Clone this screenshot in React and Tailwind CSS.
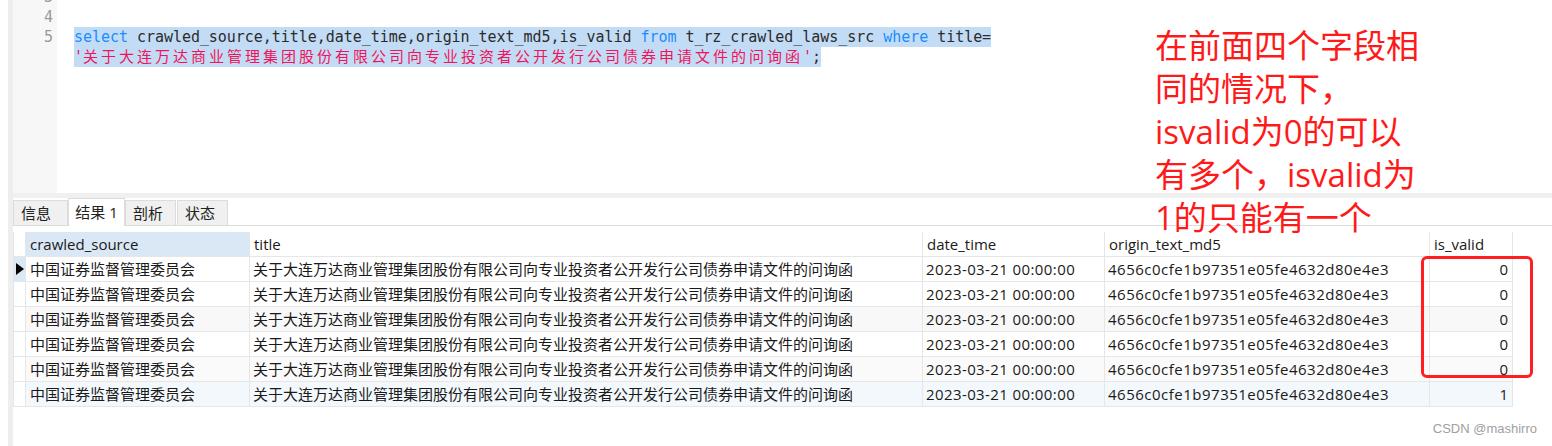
const cols = ["crawled_source", "title", "date_time", "origin_text_md5", "is_valid"];

const row = {
  src: "中国证券监督管理委员会",
  title: "关于大连万达商业管理集团股份有限公司向专业投资者公开发行公司债券申请文件的问询函",
  date: "2023-03-21 00:00:00",
  md5: "4656c0cfe1b97351e05fe4632d80e4e3",
};

const rows = [
  { valid: 0, bg: "bg-white", current: true },
  { valid: 0, bg: "bg-white" },
  { valid: 0, bg: "bg-[#f8f8f8]" },
  { valid: 0, bg: "bg-white" },
  { valid: 0, bg: "bg-[#fafafa]" },
  { valid: 1, bg: "bg-[#f3f8fd]" },
];

const mono = "font-['DejaVu_Sans_Mono','Noto_Sans_CJK_SC',monospace]";
const ui = "font-['Open_Sans','Noto_Sans_CJK_SC',sans-serif]";

function Editor() {
  return (
    <div className="flex h-[193px] shrink-0">
      <div className={`w-[44px] shrink-0 bg-[#f7f7f7] text-right pr-[4px] text-[15px] leading-5 text-[#999] ${mono}`}>
        <div className="-mt-[13px]">
          <div>3</div>
          <div>4</div>
          <div>5</div>
        </div>
      </div>
      <div className={`flex-1 pl-[17px] text-[15px] leading-5 text-[#2b2b2b] ${mono}`}>
        <div className="-mt-[13px]">
          <div className="h-5" />
          <div className="h-5" />
          <div className="h-5">
            <span className="inline-block h-5 whitespace-pre bg-[#c3dcf6] tracking-[-0.04px]">
              <span className="text-[#1a8cff]">select</span> crawled_source,title,date_time,origin_text_md5,is_valid{" "}
              <span className="text-[#1a8cff]">from</span> t_rz_crawled_laws_src <span className="text-[#1a8cff]">where</span> title=
            </span>
          </div>
          <div className="h-5">
            <span className="inline-block h-5 whitespace-pre bg-[#c3dcf6] text-[#f0145a]">
              '<span className="tracking-[3px]">{row.title}</span>'<span className="text-[#2b2b2b]">;</span>
            </span>
          </div>
        </div>
      </div>
    </div>
  );
}

function Tabs() {
  const tabs = ["信息", "结果 1", "剖析", "状态"];
  return (
    <div className={`flex h-[28px] shrink-0 items-end border-b border-[#dcdcdc] text-[15px] text-[#222] ${ui}`}>
      {tabs.map((t, i) =>
        i === 1 ? (
          <div key={t} className="-mb-px flex h-[28px] w-[57px] items-center justify-center border border-b-0 border-[#dcdcdc] bg-white">
            {t}
          </div>
        ) : (
          <div
            key={t}
            className={`flex h-[25px] items-center border border-b-0 border-[#dcdcdc] bg-[#f0f0f0] pl-[7px] ${i === 0 ? "w-[55px]" : "w-[51px]"} ${i === 3 ? "ml-px" : ""}`}
          >
            {t}
          </div>
        )
      )}
    </div>
  );
}

function Cell({ children, className = "" }) {
  return (
    <div className={`flex h-[25px] items-center overflow-hidden whitespace-nowrap border-r border-b border-[#e6e6e6] ${className}`}>
      {children}
    </div>
  );
}

function Table() {
  return (
    <div className={`mt-[6px] grid w-max grid-cols-[13px_224px_673px_182px_325px_83px] text-[15px] text-[#1a1a1a] ${ui}`}>
      <Cell className="border-l bg-white" />
      {cols.map((c, i) => (
        <Cell key={c} className={`pl-1 ${i === 0 ? "bg-[#dae8f6]" : "bg-white"}`}>
          {c}
        </Cell>
      ))}
      {rows.map((r, i) => (
        <div key={i} className="contents">
          <Cell className={`border-l justify-center ${r.current ? "bg-[#dae8f6]" : "bg-white"}`}>
            {r.current && (
              <svg width="8" height="12" viewBox="0 0 8 12">
                <polygon points="0,0 8,6 0,12" fill="#000" />
              </svg>
            )}
          </Cell>
          <Cell className={`pl-1 ${r.bg}`}>{row.src}</Cell>
          <Cell className={`pl-[3px] ${r.bg}`}>{row.title}</Cell>
          <Cell className={`pl-[3px] tracking-[0.4px] ${r.bg}`}>{row.date}</Cell>
          <Cell className={`pl-[3px] tracking-[0.5px] ${r.bg}`}>{row.md5}</Cell>
          <Cell className={`justify-end pr-[4px] ${r.bg}`}>{r.valid}</Cell>
        </div>
      ))}
    </div>
  );
}

export default function App() {
  return (
    <div className="relative flex h-[446px] w-[1552px] overflow-hidden bg-white">
      <div className="w-2 shrink-0 bg-white" />
      <div className="w-[5px] shrink-0 bg-[#eeeeee]" />
      <div className="flex flex-1 flex-col">
        <Editor />
        <div className="h-[5px] shrink-0 bg-[#f0f0f0]" />
        <Tabs />
        <Table />
      </div>

      <div className={`absolute left-[1155px] top-[24px] text-[33px] leading-[43px] text-[#ff1a1a] ${ui}`}>
        <div>在前面四个字段相</div>
        <div>同的情况下，</div>
        <div>isvalid为0的可以</div>
        <div>有多个，isvalid为</div>
        <div>1的只能有一个</div>
      </div>

      <div className="absolute left-[1421px] top-[256px] h-[122px] w-[112px] rounded-md border-[3px] border-[#ff1f1f]" />

      <div className="absolute right-[15px] bottom-[8px] font-['Liberation_Sans',sans-serif] text-[13px] text-[#a0a0a0]">
        CSDN @mashirro
      </div>
    </div>
  );
}
